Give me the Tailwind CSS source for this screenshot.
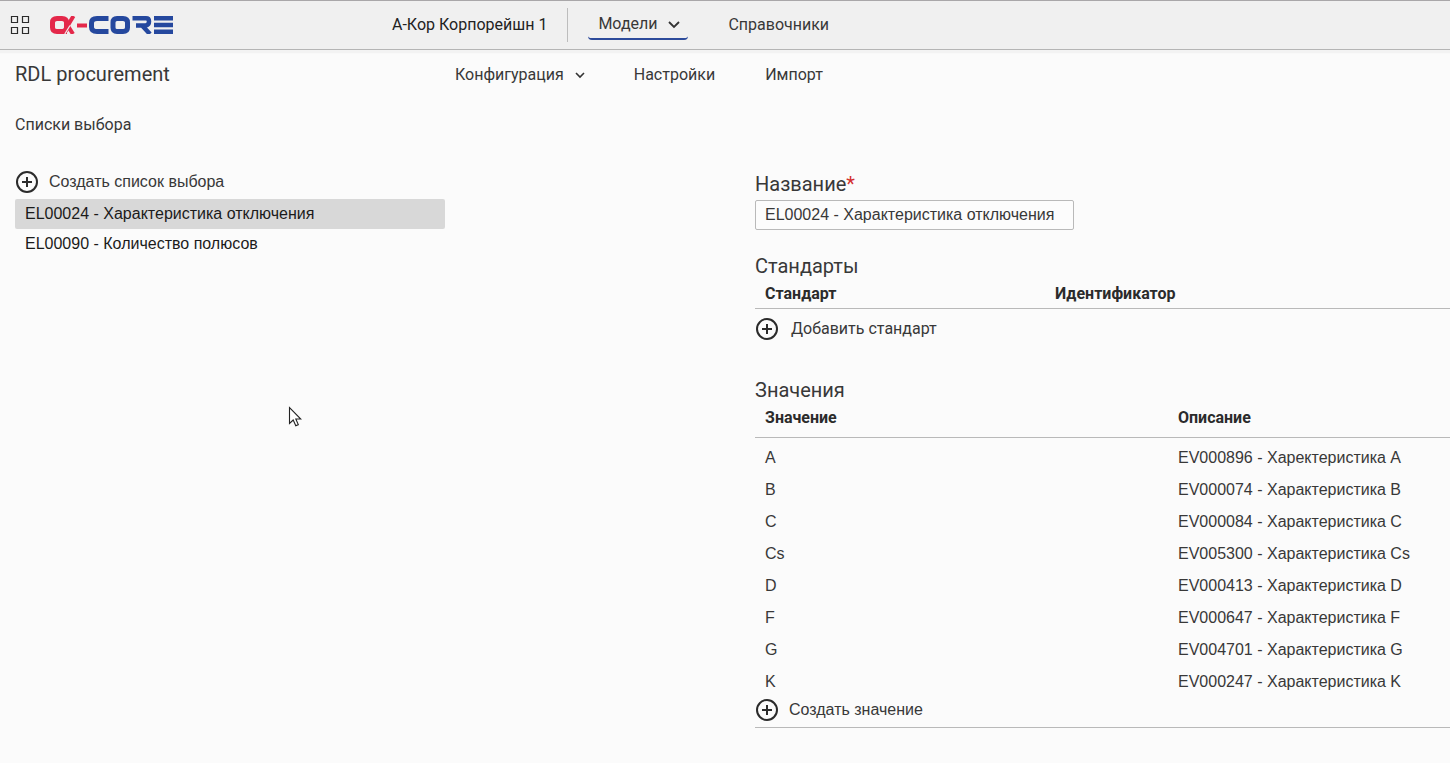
<!DOCTYPE html>
<html lang="ru">
<head>
<meta charset="utf-8">
<meta name="viewport" content="width=device-width, initial-scale=1">
<title>RDL procurement</title>
<script src="https://cdn.jsdelivr.net/npm/@tailwindcss/browser@4"></script>
</head>
<body class="min-h-screen bg-[#fbfbfb] font-[Roboto,sans-serif] text-base leading-6 text-[#383838]">
<svg class="hidden" aria-hidden="true">
  <symbol id="plus" viewBox="0 0 24 24"><circle cx="12" cy="12" r="10" fill="none" stroke="#2b2b2b" stroke-width="2"/><path d="M12 7v10M7 12h10" stroke="#2b2b2b" stroke-width="2"/></symbol>
</svg>

<header class="flex h-[50px] items-center border-t border-b border-t-[#a9a7a9] border-b-[#b5b5b5] bg-[#f0f0f0] shadow-[0_3px_1px_#f3f3f3]">
  <div class="flex w-[392px] shrink-0 items-center gap-5 pl-[10px]">
    <button type="button" aria-label="Меню" class="size-5">
      <svg class="size-5" viewBox="0 0 20 20" fill="none" stroke="#2b2b2b" stroke-width="1.2"><path d="M1.5 1.5h6v6h-6zM12.500 1.500h6v6h-6zM1.500 12.500h6v6h-6zM12.500 12.500h6v6h-6z"/></svg>
    </button>
    <a href="#" aria-label="α-CORE">
      <svg class="h-[18px] w-[123px]" viewBox="0 0 123 18" fill="none" stroke-width="5">
        <g stroke="#e4284a"><path d="M17 15.500H7Q2.500 15.500 2.500 11.500V6.500Q2.500 2.500 7 2.500H12Q16.500 2.500 16.500 6.500V11.500Q16.500 15.500 12 15.500"/><path d="M23.500 0L14.500 15" stroke-width="4"/><path d="M18 10L23 18" stroke-width="4"/><path d="M27 9.500h10" stroke-width="4"/></g>
        <path d="M14.800 18L20 9.500" stroke="#f0f0f0" stroke-width="1.200"/>
        <g stroke="#25489e"><path d="M58.500 2.500H47Q41.500 2.500 41.500 7V11Q41.500 15.500 47 15.500H58.500"/><path d="M67 2.500H73Q77.500 2.500 77.500 6.500V11.500Q77.500 15.500 73 15.500H67Q63 15.500 63 11.500V6.500Q63 2.500 67 2.500z"/><path d="M82.500 2.300H96Q99 2.300 99 5.500T96 9.500H86M92.500 10L100 18" stroke-width="4.500"/><path d="M104 2.200h19M104 9h19M104 15.800h19" stroke-width="4.400"/></g>
      </svg>
    </a>
  </div>
  <span class="text-[#222]">А-Кор Корпорейшн 1</span>
  <nav class="ml-5 flex items-center border-l border-[#bdbdbd] pl-5" aria-label="Основное меню">
    <button type="button" class="mt-px mb-0.5 flex h-[31px] w-[100px] items-center gap-2 rounded-sm border-b-2 border-[#2d4b9b] pl-[10px]">Модели
      <svg class="size-4" viewBox="0 0 16 16" fill="none" stroke="#333" stroke-width="1.800"><path d="M3 6l5 5 5-5"/></svg>
    </button>
    <a href="#" class="ml-10">Справочники</a>
  </nav>
</header>

<div class="flex h-[50px] items-center">
  <h1 class="w-[455px] shrink-0 pb-0.5 pl-[15px] text-xl leading-6">RDL procurement</h1>
  <nav class="flex items-center gap-[50px]" aria-label="Меню модели">
    <button type="button" class="flex items-center gap-2">Конфигурация
      <svg class="-mr-1 size-4" viewBox="0 0 16 16" fill="none" stroke="#333" stroke-width="1.600"><path d="M4 6l4 4 4-4"/></svg>
    </button>
    <a href="#">Настройки</a>
    <a href="#">Импорт</a>
  </nav>
</div>

<h2 class="flex h-[50px] items-center pl-[15px]">Списки выбора</h2>

<div class="flex gap-[310px] pl-[15px]">
  <aside class="w-[430px] shrink-0 pt-[17px] font-['Liberation_Sans',Arial,sans-serif]">
    <button type="button" class="mb-0.5 flex h-[30px] items-center gap-[10px]"><svg class="size-6"><use href="#plus"/></svg>Создать список выбора</button>
    <ul class="text-[#1b1b1b]">
      <li><a href="#" aria-current="true" class="flex h-[30px] items-center rounded-xs bg-[#d8d8d8] px-[10px]">EL00024 - Характеристика отключения</a></li>
      <li><a href="#" class="flex h-[30px] items-center px-[10px]">EL00090 - Количество полюсов</a></li>
    </ul>
  </aside>

  <main class="min-w-0 flex-1 pt-[22px]">
    <label for="name" class="block text-xl leading-6">Название<span class="text-[#d32f2f]">*</span></label>
    <input id="name" type="text" value="EL00024 - Характеристика отключения" class="mt-1 block h-[30px] w-[319px] rounded-xs border border-[#b9b9b9] bg-white/30 px-[9px] font-['Liberation_Sans',Arial,sans-serif]">

    <section class="mt-6">
      <h3 class="text-xl leading-6">Стандарты</h3>
      <table class="w-full table-fixed border-collapse text-left">
        <thead><tr class="h-[30px] border-b border-[#b9b9b9]"><th class="w-[290px] px-[10px] pt-0.5 text-[#2b2b2b]">Стандарт</th><th class="px-[10px] pt-0.5 text-[#2b2b2b]">Идентификатор</th></tr></thead>
      </table>
      <button type="button" class="mt-2 flex h-6 items-center gap-3"><svg class="size-6"><use href="#plus"/></svg>Добавить стандарт</button>
    </section>

    <section class="mt-[37px] border-b border-[#b9b9b9]">
      <h3 class="text-xl leading-6">Значения</h3>
      <table class="w-full table-fixed border-collapse text-left">
        <thead class="border-b border-[#b9b9b9]"><tr class="h-9 align-top"><th class="w-[413px] px-[10px] pt-1 text-[#2b2b2b]">Значение</th><th class="px-[10px] pt-1 text-[#2b2b2b]">Описание</th></tr></thead>
        <tbody class="font-['Liberation_Sans',Arial,sans-serif] before:block before:h-1">
          <tr class="h-8"><td class="px-[10px]">A</td><td class="px-[10px]">EV000896 - Харектеристика A</td></tr>
          <tr class="h-8"><td class="px-[10px]">B</td><td class="px-[10px]">EV000074 - Характеристика B</td></tr>
          <tr class="h-8"><td class="px-[10px]">C</td><td class="px-[10px]">EV000084 - Характеристика C</td></tr>
          <tr class="h-8"><td class="px-[10px]">Cs</td><td class="px-[10px]">EV005300 - Характеристика Cs</td></tr>
          <tr class="h-8"><td class="px-[10px]">D</td><td class="px-[10px]">EV000413 - Характеристика D</td></tr>
          <tr class="h-8"><td class="px-[10px]">F</td><td class="px-[10px]">EV000647 - Характеристика F</td></tr>
          <tr class="h-8"><td class="px-[10px]">G</td><td class="px-[10px]">EV004701 - Характеристика G</td></tr>
          <tr class="h-8"><td class="px-[10px]">K</td><td class="px-[10px]">EV000247 - Характеристика K</td></tr>
        </tbody>
      </table>
      <button type="button" class="mb-[5px] flex h-6 items-center gap-[10px] font-['Liberation_Sans',Arial,sans-serif]"><svg class="size-6"><use href="#plus"/></svg>Создать значение</button>
    </section>
  </main>
</div>

<!-- Mouse pointer -->
<svg class="pointer-events-none absolute top-[406px] left-[288px] h-[22px] w-[14px]" viewBox="0 0 14 22" aria-hidden="true"><path d="M1.500 1.500v16l3.700-3.500 2.600 5.700 2.500-1.100-2.500-5.600h5z" fill="#fff" stroke="#222" stroke-width="1.100"/></svg>
</body>
</html>
